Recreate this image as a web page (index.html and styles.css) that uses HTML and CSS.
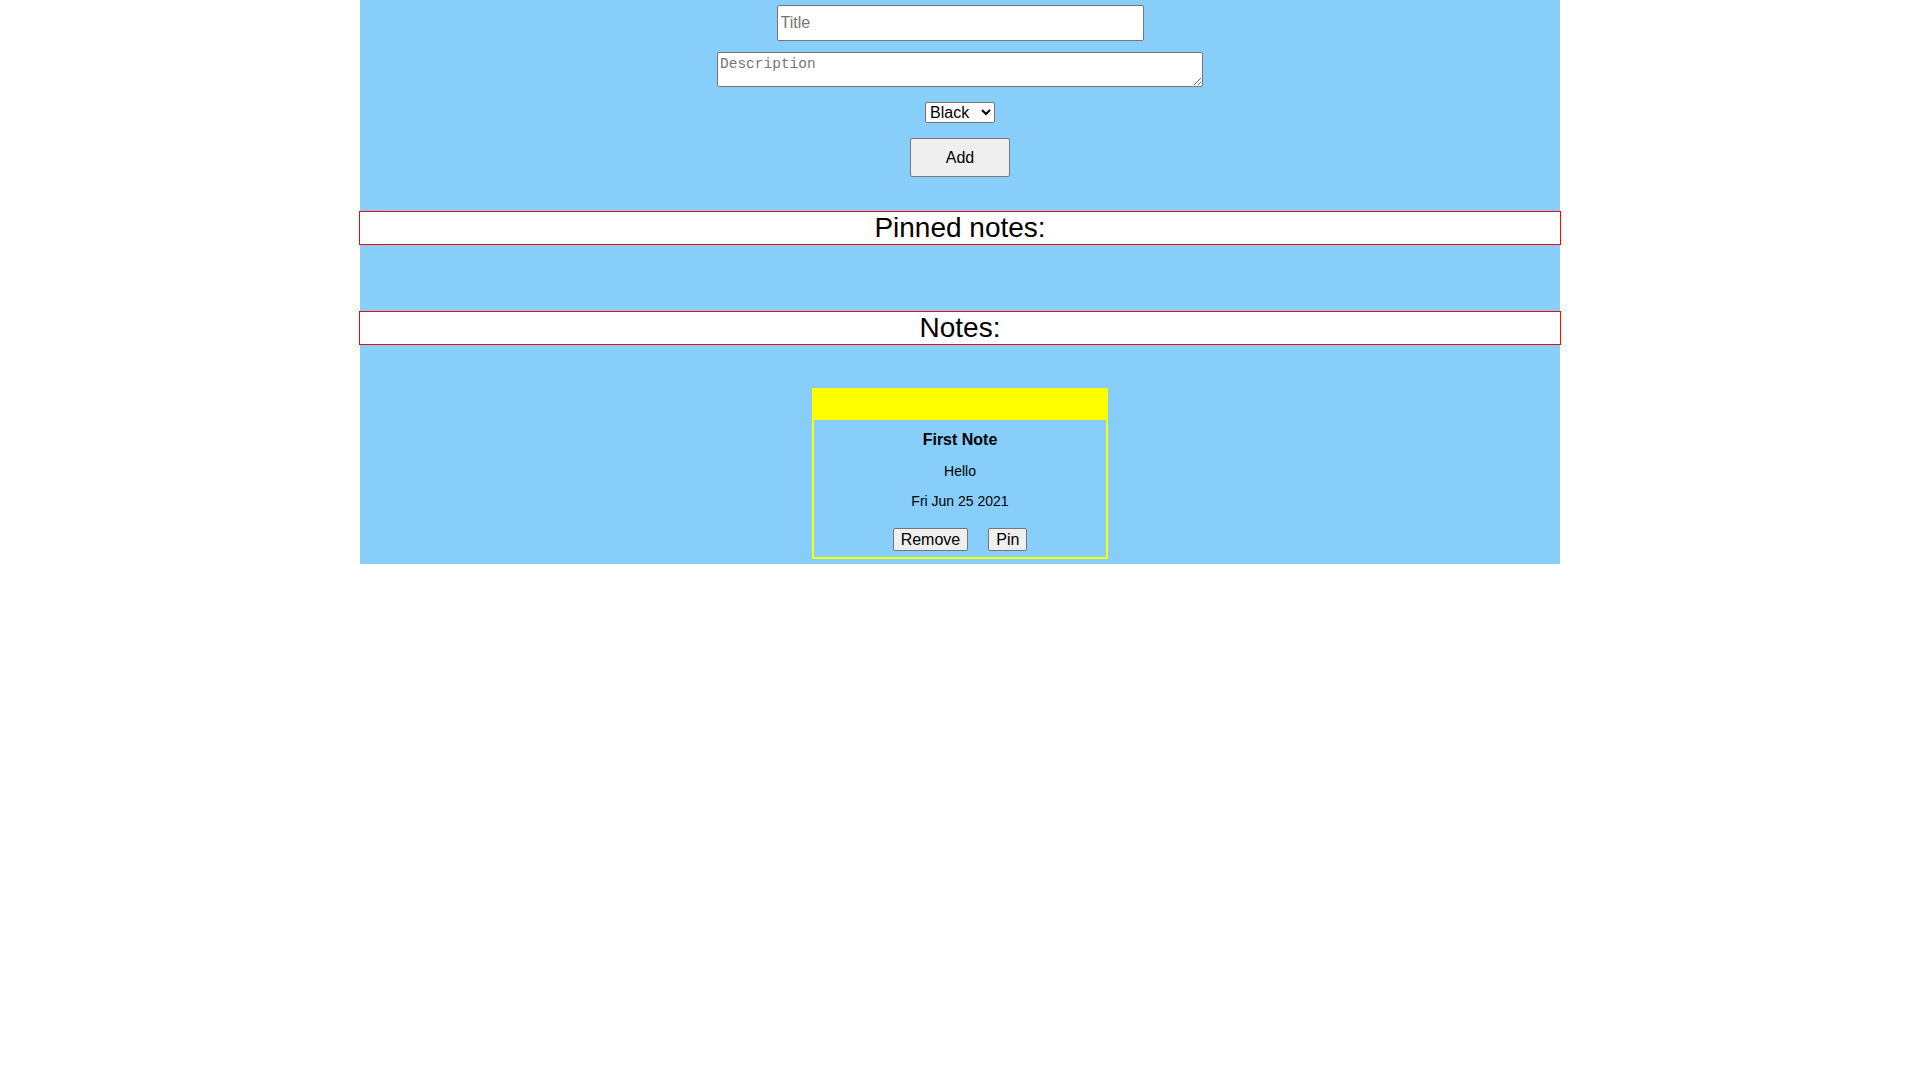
FILE: index.html
```html
<!DOCTYPE html>
<html>
<head>
<meta charset="utf-8">
<title>Notes</title>
<link rel="stylesheet" href="styles.css">
</head>
<body>
<div class="app">
  <input class="title-input" type="text" placeholder="Title">
  <textarea class="desc-input" placeholder="Description"></textarea>
  <select class="color-select">
    <option>Black</option>
    <option>Yellow</option>
  </select>
  <button class="add-btn">Add</button>

  <h2 class="section-head pinned-head">Pinned notes:</h2>
  <div class="pinned-list"></div>

  <h2 class="section-head notes-head">Notes:</h2>
  <div class="notes-list">
    <div class="note">
      <div class="note-bar"></div>
      <div class="note-body">
        <p class="note-title">First Note</p>
        <p class="note-desc">Hello</p>
        <p class="note-date">Fri Jun 25 2021</p>
        <div class="note-actions">
          <button class="note-btn">Remove</button>
          <button class="note-btn">Pin</button>
        </div>
      </div>
    </div>
  </div>
</div>
</body>
</html>
```
FILE: styles.css
```css
html, body {
  margin: 0;
  padding: 0;
  background: #ffffff;
}

body {
  font-family: "Liberation Sans", Arial, sans-serif;
  color: #000;
}

.app {
  width: 1200px;
  margin: 0 auto;
  background: #87cefa;
  display: flex;
  flex-direction: column;
  align-items: center;
  padding-bottom: 5px;
}

.title-input {
  box-sizing: border-box;
  margin-top: 5px;
  width: 367px;
  height: 36px;
  border: 1px solid #767676;
  border-radius: 2px;
  padding: 0 3px;
  font-family: "Liberation Sans", Arial, sans-serif;
  font-size: 16px;
  background: #fff;
}

.title-input::placeholder {
  color: #757575;
}

.desc-input {
  box-sizing: border-box;
  margin-top: 11px;
  width: 486px;
  height: 35px;
  border: 1px solid #767676;
  border-radius: 2px;
  padding: 3px 2px 2px;
  font-family: "Liberation Mono", monospace;
  font-size: 14.5px;
  background: #fff;
}

.desc-input::placeholder {
  color: #757575;
}

.color-select {
  box-sizing: border-box;
  margin-top: 15px;
  width: 70px;
  height: 21px;
  font-family: "Liberation Sans", Arial, sans-serif;
  font-size: 16px;
  border: 1px solid #767676;
  border-radius: 2px;
  background: #fff;
  color: #000;
  padding: 0;
}

.add-btn {
  box-sizing: border-box;
  margin-top: 15px;
  width: 100px;
  height: 39px;
  font-family: "Liberation Sans", Arial, sans-serif;
  font-size: 16px;
  background: #efefef;
  border: 1px solid #767676;
  border-radius: 2px;
  color: #000;
}

.section-head {
  box-sizing: border-box;
  width: 1202px;
  height: 34px;
  margin: 0;
  border: 1px solid #ff0000;
  background: #fff;
  font-size: 28px;
  font-weight: normal;
  line-height: 32px;
  text-align: center;
}

.pinned-head {
  margin-top: 34px;
}

.pinned-list {
  height: 66px;
}

.notes-list {
  margin-top: 43px;
  display: flex;
  justify-content: center;
}

.note {
  box-sizing: border-box;
  width: 296px;
  height: 171px;
  border: 2px solid #ffff00;
  display: flex;
  flex-direction: column;
}

.note-bar {
  height: 30px;
  background: #ffff00;
}

.note-body {
  display: flex;
  flex-direction: column;
  align-items: center;
  padding-top: 11px;
}

.note-body p {
  margin: 0;
}

.note-title {
  font-size: 16px;
  font-weight: bold;
  line-height: 18px;
}

.note-desc {
  margin-top: 14px !important;
  font-size: 14px;
  line-height: 16px;
}

.note-date {
  margin-top: 14px !important;
  font-size: 14px;
  line-height: 16px;
}

.note-actions {
  margin-top: 19px;
  display: flex;
  gap: 20px;
}

.note-btn {
  box-sizing: border-box;
  height: 23px;
  padding: 0 7px;
  font-family: "Liberation Sans", Arial, sans-serif;
  font-size: 16px;
  background: #efefef;
  border: 1px solid #767676;
  border-radius: 2px;
  color: #000;
}
```
